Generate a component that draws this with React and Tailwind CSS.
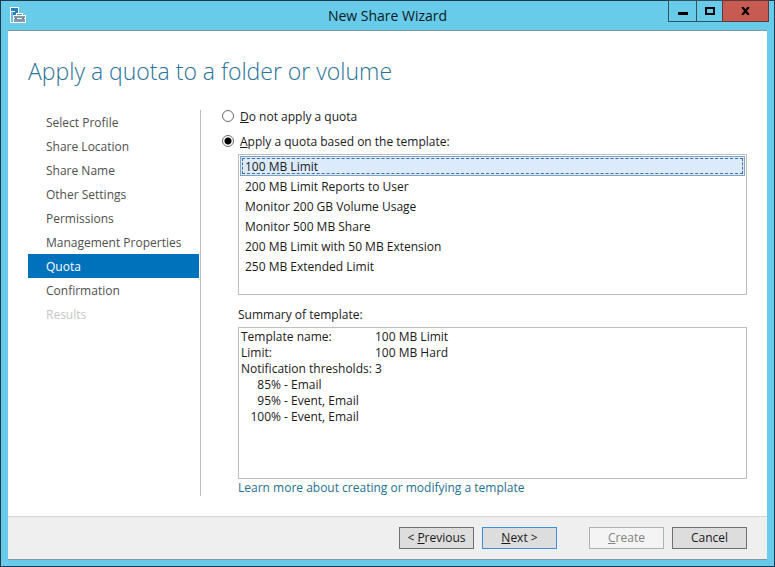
import { useState } from "react";

const steps = [
  "Select Profile",
  "Share Location",
  "Share Name",
  "Other Settings",
  "Permissions",
  "Management Properties",
  "Quota",
  "Confirmation",
  "Results",
];

const templates = [
  "100 MB Limit",
  "200 MB Limit Reports to User",
  "Monitor 200 GB Volume Usage",
  "Monitor 500 MB Share",
  "200 MB Limit with 50 MB Extension",
  "250 MB Extended Limit",
];

const summary = [
  ["Template name:", "100 MB Limit"],
  ["Limit:", "100 MB Hard"],
  ["Notification thresholds:", "3"],
];

const thresholds = [
  ["85%", "Email"],
  ["95%", "Event, Email"],
  ["100%", "Event, Email"],
];

function ServerIcon() {
  return (
    <svg width="16" height="16" viewBox="0 0 16 16" shapeRendering="crispEdges" aria-hidden="true">
      <rect x="0" y="0" width="9" height="16" fill="#fff" />
      <rect x="1" y="1" width="7" height="14" fill="#2a80b8" />
      <rect x="1" y="4" width="4" height="1" fill="#fff" />
      <rect x="1" y="5" width="2" height="10" fill="#6db9de" />
      <path d="M6 6h7v2h3v8H3V8h3z" fill="#fff" />
      <path d="M7 7h5v1H7z" fill="#6b8c9d" />
      <path d="M4 9h11v2H4zM4 12h11v3H4z" fill="#8499a5" />
      <path d="M5 11h2v1H5zM12 11h2v1h-2z" fill="#5d7988" />
    </svg>
  );
}

function TitleBar() {
  return (
    <header className="grid h-[29px] shrink-0 grid-cols-[1fr_auto_1fr] items-start">
      <div className="pt-[6px] pl-[2px]">
        <ServerIcon />
      </div>
      <h1 className="pt-[5px] text-[14px] leading-5 text-[#0b1a22]">New Share Wizard</h1>
      <div className="-mt-px -mr-0.5 flex h-[22px] justify-end">
        <button aria-label="Minimize" className="flex w-[29px] items-center justify-center border border-[#35525f]">
          <svg width="10" height="10" viewBox="0 0 10 10" shapeRendering="crispEdges">
            <path d="M0 6h10v3H0z" fill="#000" />
          </svg>
        </button>
        <button aria-label="Maximize" className="-ml-px flex w-[27px] items-center justify-center border border-[#35525f]">
          <svg width="10" height="8" viewBox="0 0 10 8" shapeRendering="crispEdges">
            <path d="M0 0h10v8H0zM2 2v4h6V2z" fill="#000" fillRule="evenodd" />
          </svg>
        </button>
        <button aria-label="Close" className="-ml-px flex w-[47px] items-center justify-center border border-[#5f3a38] bg-[#c75b52]">
          <svg width="9" height="8" viewBox="0 0 9 8">
            <path d="M1.2 0L7.8 8M7.8 0L1.2 8" stroke="#000" strokeWidth="2.2" />
          </svg>
        </button>
      </div>
    </header>
  );
}

function Steps() {
  return (
    <nav aria-label="Wizard steps" className="w-[173px] shrink-0 border-r border-[#bdbdbd] pr-px">
      <ol>
        {steps.map((s) => (
          <li key={s}>
            {s === "Results" ? (
              <span className="block pt-0.5 pl-[18px] text-[12px] leading-[22px] text-[#c6c6c6]">{s}</span>
            ) : (
              <a
                href="#step"
                aria-current={s === "Quota" ? "step" : undefined}
                className={
                  s === "Quota"
                    ? "block bg-[#0072bc] pt-0.5 pl-[18px] text-[12px] leading-[22px] whitespace-nowrap text-white"
                    : "block pt-0.5 pl-[18px] text-[12px] leading-[22px] whitespace-nowrap text-[#4f4f4f]"
                }
              >
                {s}
              </a>
            )}
          </li>
        ))}
      </ol>
    </nav>
  );
}

function Choice({ id, checked, onChange, children }) {
  return (
    <div className="flex h-[25px] items-start gap-[6px]">
      <input
        type="radio"
        name="quota"
        id={id}
        checked={checked}
        onChange={onChange}
        className="size-3 shrink-0 appearance-none rounded-full border border-[#6a6a6a] bg-white checked:bg-[radial-gradient(circle,#000_3px,#fff_4px)]"
      />
      <label htmlFor={id} className="-mt-px leading-4">
        {children}
      </label>
    </div>
  );
}

export default function App() {
  const [apply, setApply] = useState(true);
  const [selected, setSelected] = useState(0);

  return (
    <div className="flex min-h-screen flex-col border border-[#1f3b49] bg-[#68cbe9] px-[7px] pb-[6px] font-['Open_Sans','Noto_Sans',sans-serif] text-[12px] text-[#1a1a1a]">
      <TitleBar />
      <div className="flex flex-1 flex-col border-y border-[#7f9aa6] bg-white">
        <main className="flex flex-1 flex-col px-5 pt-6 pb-5">
          <h2 className="text-[23px] leading-8 font-light text-[#2a7299]">Apply a quota to a folder or volume</h2>
          <div className="mt-[23px] flex flex-1">
            <Steps />
            <section className="flex min-w-0 flex-1 flex-col pl-[21px]">
              <Choice id="none" checked={!apply} onChange={() => setApply(false)}>
                <u>D</u>o not apply a quota
              </Choice>
              <Choice id="template" checked={apply} onChange={() => setApply(true)}>
                <u>A</u>pply a quota based on the template:
              </Choice>
              <div className="-mt-[6px] flex flex-1 flex-col pl-4">
                <ul role="listbox" aria-label="Quota templates" className="h-[141px] border border-[#c0c0c0] p-px">
                  {templates.map((t, i) => (
                    <li
                      key={t}
                      role="option"
                      aria-selected={i === selected}
                      onClick={() => setSelected(i)}
                      className={
                        i === selected
                          ? "h-5 border border-[#7da2ce] bg-[#dcebfc] p-px"
                          : "h-5 border border-transparent p-px"
                      }
                    >
                      <span
                        className={
                          i === selected
                            ? "block h-4 border border-dashed border-[#4a6d96] pl-[2px] leading-4"
                            : "block h-4 border border-transparent pl-[2px] leading-4"
                        }
                      >
                        {t}
                      </span>
                    </li>
                  ))}
                </ul>
                <h3 className="mt-3 leading-4">Summary of template:</h3>
                <div className="mt-1 min-h-[152px] flex-1 border border-[#c0c0c0] px-[2px] pt-px">
                  <table className="leading-4">
                    <tbody>
                      {summary.map(([k, v]) => (
                        <tr key={k}>
                          <th scope="row" className="w-[134px] p-0 text-left font-normal whitespace-nowrap">
                            {k}
                          </th>
                          <td className="p-0">{v}</td>
                        </tr>
                      ))}
                    </tbody>
                  </table>
                  <table className="leading-4">
                    <tbody>
                      {thresholds.map(([p, a]) => (
                        <tr key={p}>
                          <th scope="row" className="w-10 p-0 text-right font-normal">
                            {p}
                          </th>
                          <td className="p-0 pl-[3px]">- {a}</td>
                        </tr>
                      ))}
                    </tbody>
                  </table>
                </div>
                <a href="#learn" className="mt-px self-start leading-4 text-[#24708f]">
                  Learn more about creating or modifying a template
                </a>
              </div>
            </section>
          </div>
        </main>
        <footer className="flex h-[43px] items-center justify-end gap-2 border-t border-[#d4d4d4] bg-[#efefef] pr-5">
          <button className="h-[22px] w-[75px] border border-[#707070] bg-[#dddddd]">
            &lt; <u>P</u>revious
          </button>
          <button className="h-[22px] w-[75px] border border-[#3c8ede] bg-[#dddddd]">
            <u>N</u>ext &gt;
          </button>
          <button disabled className="ml-6 h-[22px] w-[75px] border border-[#adb2b5] bg-[#f4f4f4] text-[#838383]">
            <u>C</u>reate
          </button>
          <button className="h-[22px] w-[75px] border border-[#707070] bg-[#dddddd]">Cancel</button>
        </footer>
      </div>
    </div>
  );
}
